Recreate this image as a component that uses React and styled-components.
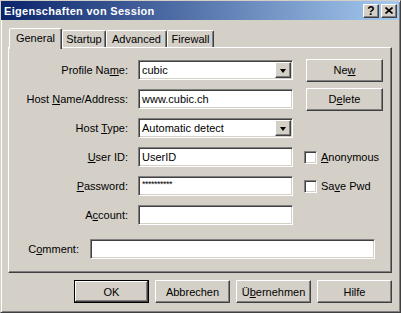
import React from 'react';
import styled, { createGlobalStyle, css } from 'styled-components';

const GlobalStyle = createGlobalStyle`
    html, body { margin:0; padding:0; background:#d4d0c8; }
    body { font-family:'Liberation Sans', Arial, sans-serif; font-size:11px; color:#000; }
`

const raised = css`
    border:1px solid;
    border-color:#fff #404040 #404040 #fff;
    box-shadow:inset -1px -1px #808080, inset 1px 1px #d4d0c8;
    background:#d4d0c8;
`

const sunken = css`
    border:1px solid;
    border-color:#808080 #fff #fff #808080;
    box-shadow:inset 1px 1px #404040, inset -1px -1px #d4d0c8;
    background:#fff;
`

const Window = styled.div`
    box-sizing:border-box;
    width:401px;
    height:313px;
    background:#d4d0c8;
    border:1px solid;
    border-color:#d4d0c8 #404040 #404040 #d4d0c8;
    box-shadow:inset 1px 1px #fff, inset -1px -1px #808080;
    display:flex;
    flex-direction:column;
`

const TitleBar = styled.div`
    height:19px;
    margin-right:1px;
    display:flex;
    align-items:center;
    justify-content:space-between;
    padding:0 2px 0 3px;
    background:linear-gradient(to right, #0a246a, #a6caf0);
    color:#fff;
    font-weight:bold;
    font-size:11px;
    letter-spacing:0.3px;
`

const TitleButtons = styled.div`
    display:flex;
    gap:2px;
`

const TitleButton = styled.div`
    ${raised};
    box-sizing:border-box;
    width:16px;
    height:14px;
    display:flex;
    align-items:center;
    justify-content:center;
    color:#000;
    font-size:12px;
    font-weight:bold;
    letter-spacing:0;
    line-height:1;
`

const Body = styled.div`
    padding:8px 8px 0 7px;
    display:flex;
    flex-direction:column;
`

const TabStrip = styled.div`
    display:flex;
    align-items:flex-end;
    height:19px;
    padding-left:1px;
    position:relative;
    z-index:1;
`

const Tab = styled.div`
    box-sizing:border-box;
    width:${p => p.$w}px;
    height:${p => p.$active ? '21px' : '17px'};
    margin-bottom:${p => p.$active ? '-2px' : '0'};
    background:#d4d0c8;
    border:1px solid;
    border-bottom:none;
    border-color:#fff #404040 transparent #fff;
    border-radius:2px 2px 0 0;
    box-shadow:inset -1px 0 #808080;
    display:flex;
    justify-content:center;
    align-items:${p => p.$active ? 'flex-start' : 'center'};
    padding-top:${p => p.$active ? '3px' : '0'};
    white-space:nowrap;
`

const Panel = styled.div`
    box-sizing:border-box;
    height:226px;
    border:1px solid;
    border-color:#fff #404040 #404040 #fff;
    box-shadow:inset -1px -1px #808080, inset 1px 1px #d4d0c8;
    padding:12px 0 0 1px;
`

const Form = styled.div`
    display:grid;
    grid-template-columns:118px 155px 1fr;
    grid-auto-rows:20px;
    column-gap:10px;
    row-gap:9px;
    align-items:center;
`

const Label = styled.div`
    text-align:right;
    white-space:nowrap;
`

const Field = styled.div`
    ${sunken};
    box-sizing:border-box;
    height:20px;
    width:${p => p.$width || 155}px;
    display:flex;
    align-items:center;
    padding:0 2px 0 3px;
    overflow:hidden;
    white-space:nowrap;
`

const FieldText = styled.span`
    flex:1;
`

const DropButton = styled.div`
    ${raised};
    box-sizing:border-box;
    width:16px;
    height:16px;
    margin-right:-1px;
    display:flex;
    align-items:center;
    justify-content:center;
`

const Arrow = styled.div`
    width:0;
    height:0;
    border-left:3.5px solid transparent;
    border-right:3.5px solid transparent;
    border-top:4px solid #000;
    margin-top:1px;
`

const PushButton = styled.div`
    ${raised};
    box-sizing:border-box;
    width:${p => p.$width || 75}px;
    height:23px;
    display:flex;
    align-items:center;
    justify-content:center;
    ${p => p.$default && css`
        border-color:#000;
        box-shadow:inset -1px -1px #404040, inset 1px 1px #fff, inset -2px -2px #808080;
    `}
`

const SideButton = styled(PushButton)`
    margin-left:3px;
`

const Check = styled.label`
    display:flex;
    align-items:center;
    gap:4px;
    margin-left:1px;
    white-space:nowrap;
`

const CheckBox = styled.span`
    ${sunken};
    box-sizing:border-box;
    width:13px;
    height:13px;
`

const CommentRow = styled.div`
    display:flex;
    align-items:center;
    gap:11px;
    margin-top:14px;
`

const CommentLabel = styled(Label)`
    width:69px;
`

const ButtonRow = styled.div`
    display:flex;
    justify-content:flex-end;
    gap:6px;
    margin-top:7px;
`

const Mask = styled.span`
    font-size:9px;
    letter-spacing:-0.5px;
    position:relative;
    top:-2px;
`

const CloseGlyph = () => (
    <svg width="8" height="7" viewBox="0 0 8 7">
        <path d="M0.5 0.5 L7.5 6.5 M7.5 0.5 L0.5 6.5" stroke="#000" strokeWidth="1.6" />
    </svg>
)

const Combo = ({ value }) => (
    <Field>
        <FieldText>{value}</FieldText>
        <DropButton><Arrow /></DropButton>
    </Field>
)

const App = () => {
    return (
        <>
            <GlobalStyle />
            <Window>
                <TitleBar>
                    <span>Eigenschaften von Session</span>
                    <TitleButtons>
                        <TitleButton>?</TitleButton>
                        <TitleButton><CloseGlyph /></TitleButton>
                    </TitleButtons>
                </TitleBar>
                <Body>
                    <TabStrip>
                        <Tab $active $w={53}>General</Tab>
                        <Tab $w={44}>Startup</Tab>
                        <Tab $w={61}>Advanced</Tab>
                        <Tab $w={47}>Firewall</Tab>
                    </TabStrip>
                    <Panel>
                        <Form>
                            <Label>Profile Na<u>m</u>e:</Label>
                            <Combo value='cubic' />
                            <SideButton $width={77}>Ne<u>w</u></SideButton>

                            <Label>Host <u>N</u>ame/Address:</Label>
                            <Field>www.cubic.ch</Field>
                            <SideButton $width={77}>D<u>e</u>lete</SideButton>

                            <Label>Host <u>T</u>ype:</Label>
                            <Combo value='Automatic detect' />
                            <div />

                            <Label><u>U</u>ser ID:</Label>
                            <Field>UserID</Field>
                            <Check><CheckBox /><span><u>A</u>nonymous</span></Check>

                            <Label><u>P</u>assword:</Label>
                            <Field><Mask>**********</Mask></Field>
                            <Check><CheckBox /><span>Sa<u>v</u>e Pwd</span></Check>

                            <Label>A<u>c</u>count:</Label>
                            <Field />
                            <div />
                        </Form>
                        <CommentRow>
                            <CommentLabel>C<u>o</u>mment:</CommentLabel>
                            <Field $width={285} />
                        </CommentRow>
                    </Panel>
                    <ButtonRow>
                        <PushButton $default>OK</PushButton>
                        <PushButton>Abbrechen</PushButton>
                        <PushButton>Ü<u>b</u>ernehmen</PushButton>
                        <PushButton>Hilfe</PushButton>
                    </ButtonRow>
                </Body>
            </Window>
        </>
    );
};

export default App;
